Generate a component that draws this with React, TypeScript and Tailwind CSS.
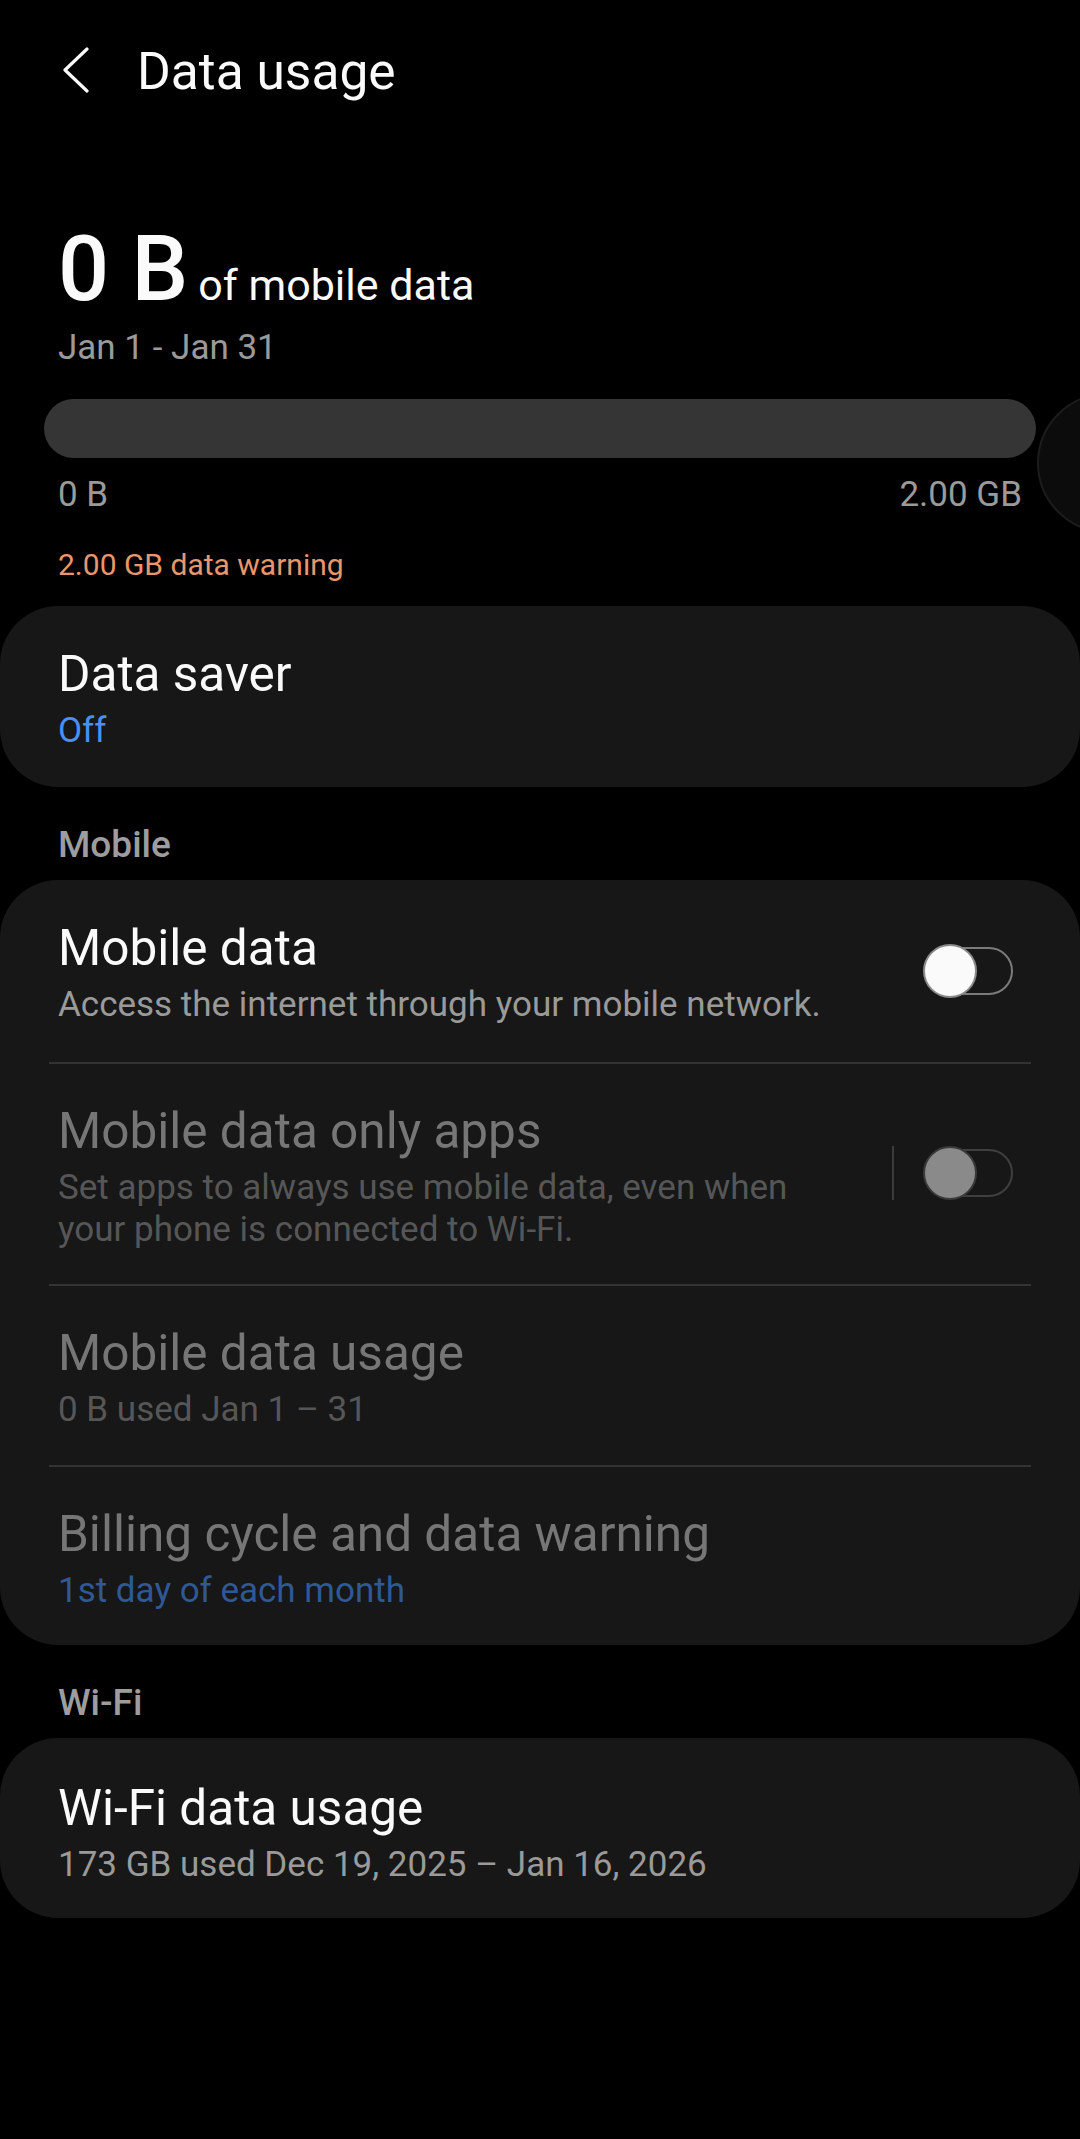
import React from 'react'

function Toggle({ disabled = false }: { disabled?: boolean }) {
  return (
    <div className="relative w-[90px] h-[54px] shrink-0">
      <div
        className={
          'absolute right-0 top-[3px] h-[48px] w-[74px] rounded-full border-2 ' +
          (disabled ? 'border-[#3f3f3f]' : 'border-[#7b7b7b]')
        }
      />
      <div
        className={
          'absolute left-0 top-0 w-[54px] h-[54px] rounded-full border-2 ' +
          (disabled ? 'bg-[#8a8a8a] border-[#3a3a3a]' : 'bg-[#fafafa] border-[#8a8a8a]')
        }
      />
    </div>
  )
}

function Divider() {
  return <div className="h-[2px] bg-[#333333] mx-[49px]" />
}

export default function App() {
  return (
    <div className="relative w-full min-h-[2139px] bg-black text-[#fafafa] overflow-hidden font-['Roboto','Noto_Sans',sans-serif]">
      {/* Header */}
      <div className="flex items-center h-[140px] pl-[62px]">
        <svg width="28" height="46" viewBox="0 0 28 46" fill="none">
          <path d="M25 2 L3 23 L25 44" stroke="#fafafa" strokeWidth="3.2" strokeLinecap="round" strokeLinejoin="round" />
        </svg>
        <h1 className="ml-[47px] mt-[3px] text-[51.5px] leading-none">Data usage</h1>
      </div>

      {/* Summary */}
      <div className="px-[58px]">
        <div className="flex items-baseline mt-[85px]">
          <span className="text-[90px] leading-none font-medium">0 B</span>
          <span className="ml-[10px] text-[43px] leading-none">of mobile data</span>
        </div>
        <p className="mt-[12px] text-[35px] leading-[42px] text-[#9a9a9a]">Jan 1 - Jan 31</p>
        <div className="mt-[30px] -mx-[14px] h-[59px] rounded-full bg-[#353535]" />
        <div className="flex justify-between mt-[16px] text-[35px] leading-[42px] text-[#9a9a9a]">
          <span>0 B</span>
          <span>2.00 GB</span>
        </div>
        <p className="mt-[31px] text-[30px] leading-[36px] text-[#e8966c]">2.00 GB data warning</p>
      </div>

      {/* Edge handle */}
      <div className="absolute left-[1037px] top-[393px] w-[140px] h-[140px] rounded-full bg-[#0c0c0c] border-2 border-[#1c1c1c]" />

      {/* Data saver */}
      <div className="mt-[23px] rounded-[58px] bg-[#171717] pt-[40px] pb-[35px] px-[58px]">
        <p className="text-[49.5px] leading-[56px]">Data saver</p>
        <p className="mt-[8px] text-[35px] leading-[42px] text-[#4a8ff2]">Off</p>
      </div>

      {/* Mobile */}
      <p className="mt-[37px] px-[58px] text-[37px] leading-[42px] font-medium text-[#9d9d9d]">Mobile</p>
      <div className="mt-[14px] rounded-[58px] bg-[#171717]">
        <div className="flex items-center pl-[58px] pr-[67px] pt-[40px] pb-[36px]">
          <div className="flex-1">
            <p className="text-[49.5px] leading-[56px]">Mobile data</p>
            <p className="mt-[8px] text-[35px] leading-[42px] text-[#9a9a9a]">
              Access the internet through your mobile network.
            </p>
          </div>
          <div className="mb-[4px]">
            <Toggle />
          </div>
        </div>
        <Divider />
        <div className="flex items-center pl-[58px] pr-[67px] pt-[39px] pb-[33px]">
          <div className="flex-1 pr-[60px]">
            <p className="text-[49.5px] leading-[56px] text-[#767676]">Mobile data only apps</p>
            <p className="mt-[8px] text-[35px] leading-[42px] text-[#565656]">
              Set apps to always use mobile data, even when your phone is connected to Wi-Fi.
            </p>
          </div>
          <div className="w-[2px] h-[54px] bg-[#3c3c3c] mr-[29px] mb-[8px]" />
          <div className="mb-[8px]">
            <Toggle disabled />
          </div>
        </div>
        <Divider />
        <div className="pl-[58px] pr-[67px] pt-[39px] pb-[34px]">
          <p className="text-[49.5px] leading-[56px] text-[#767676]">Mobile data usage</p>
          <p className="mt-[8px] text-[35px] leading-[42px] text-[#565656]">0 B used Jan 1 – 31</p>
        </div>
        <Divider />
        <div className="pl-[58px] pr-[67px] pt-[39px] pb-[33px]">
          <p className="text-[49.5px] leading-[56px] text-[#767676]">Billing cycle and data warning</p>
          <p className="mt-[8px] text-[35px] leading-[42px] text-[#2f5896]">1st day of each month</p>
        </div>
      </div>

      {/* Wi-Fi */}
      <p className="mt-[37px] px-[58px] text-[37px] leading-[42px] font-medium text-[#9d9d9d]">Wi-Fi</p>
      <div className="mt-[14px] rounded-[58px] bg-[#171717] pt-[42px] pb-[32px] px-[58px]">
        <p className="text-[49.5px] leading-[56px]">Wi-Fi data usage</p>
        <p className="mt-[8px] text-[35px] leading-[42px] text-[#9a9a9a]">
          173 GB used Dec 19, 2025 – Jan 16, 2026
        </p>
      </div>
    </div>
  )
}
